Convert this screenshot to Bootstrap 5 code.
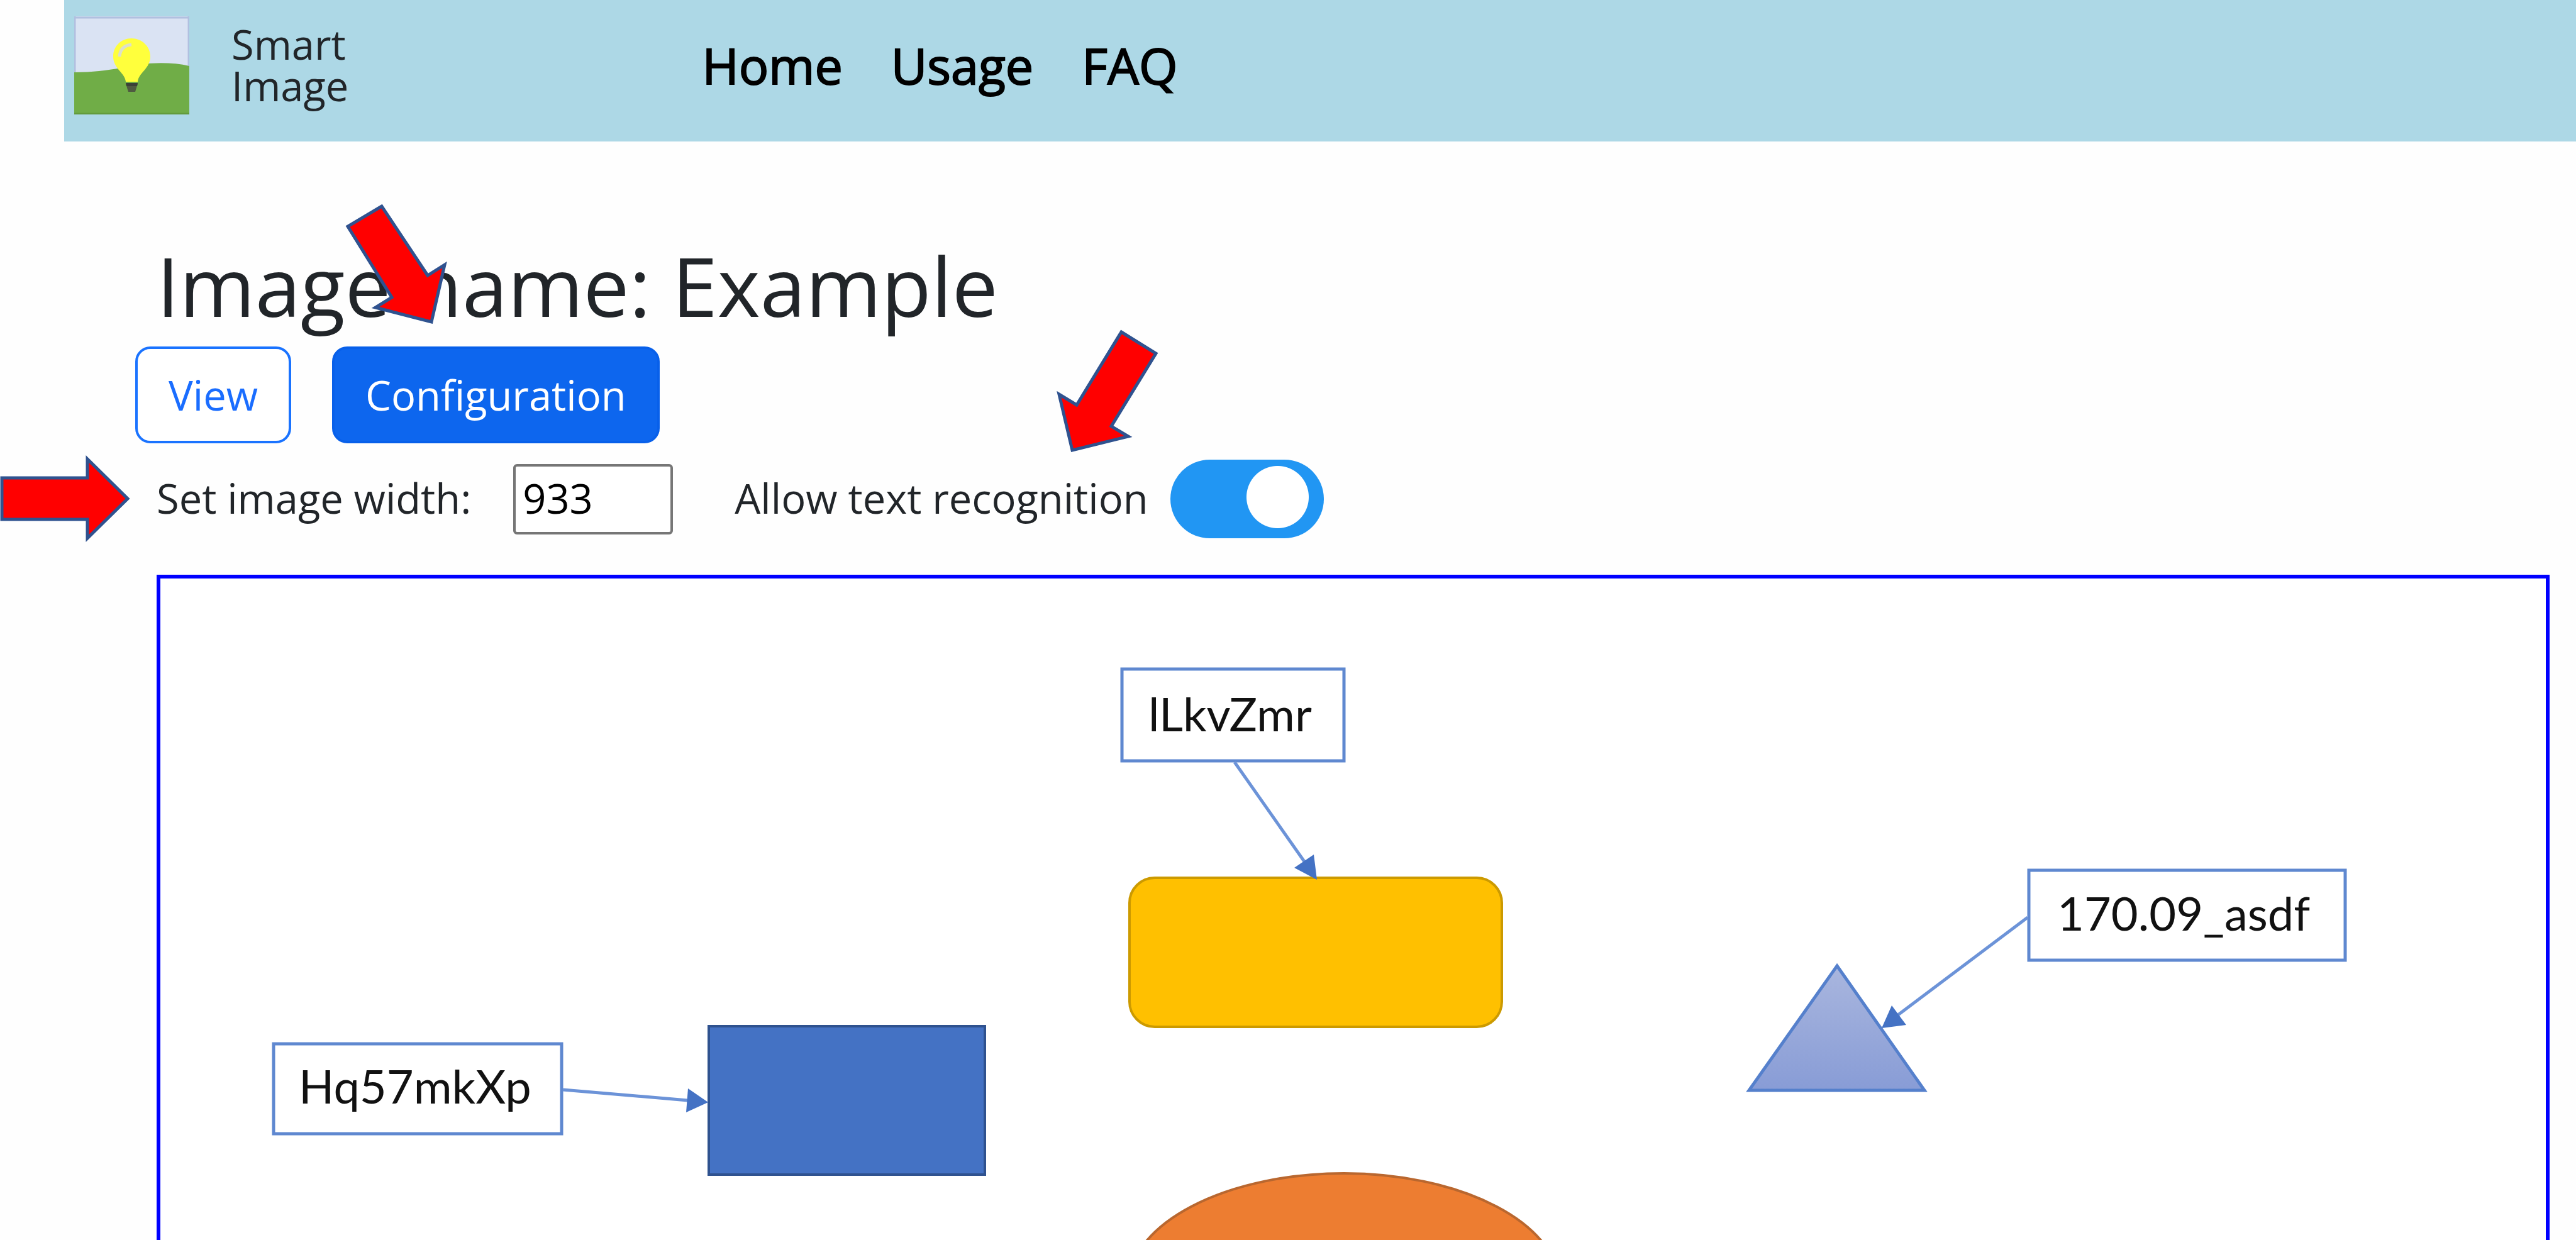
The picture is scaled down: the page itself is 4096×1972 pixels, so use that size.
<!DOCTYPE html>
<html lang="en">
<head>
<meta charset="utf-8">
<meta name="viewport" content="width=device-width, initial-scale=1">
<title>Smart Image</title>
<link href="https://cdn.jsdelivr.net/npm/bootstrap@5.3.0/dist/css/bootstrap.min.css" rel="stylesheet">
<style>
  body { font-family: "Open Sans", "Noto Sans", sans-serif; font-size: 65px; line-height: 98px; color: #212529; background: #fefefe; }
  .site-head { margin-left: 102px; padding: 26px 0 43px 16px; background: #add8e6; }
  .brand { gap: 67px; line-height: 66px; color: #212529; }
  .brand svg { width: 183px; height: 156px; }
  .brand span { padding-bottom: 3px; }
  .site-nav { gap: 77px; padding-left: 4px; font-size: 79px; }
  .site-nav a { color: #000; -webkit-text-stroke: 2px #000; }
  .page { padding: 151px 42px 0 215px; }
  .indent { margin-left: 34px; }
  .page h1 { font-size: 130px; line-height: 156px; margin-bottom: 19px; font-weight: 400; }
  .tabs { gap: 65px; }
  .tabs .btn { padding: 24px 49px; border-width: 4px; border-radius: 24px; font-size: 65px; line-height: 98px; }
  .tabs .btn-outline-primary { --bs-btn-color: #1a6dff; --bs-btn-border-color: #1a73ff; background: #fff; }
  .tabs .btn-primary { --bs-btn-bg: #0d66ee; --bs-btn-border-color: #0860ea; }
  .controls { margin-top: 26px; margin-bottom: 58px; }
  .controls label { padding-bottom: 4px; }
  .width-box { width: 254px; height: 112px; margin-left: 67px; margin-right: 98px; padding: 0 8px 4px 11px; border: 4px solid #767676; border-radius: 6px; color: #000; background: #fff; }
  .controls .toggle { width: 244px; height: 125px; margin: 0 0 0 35px; border: 0; border-radius: 63px; background: #2196f3 radial-gradient(circle, #fff 49px, transparent 50px) 121px 10px / 99px 99px no-repeat; }
  .frame { border: 6px solid #00f; border-bottom: 0; background: #fff; }
  .frame svg { width: 100%; }
  .node-label { font-family: Lato, "Open Sans", sans-serif; font-size: 74px; fill: #111; }
  .pointer { position: absolute; overflow: visible; fill: #f00; stroke: #2f528f; stroke-width: 5px; pointer-events: none; z-index: 2; }
  .to-config { left: 23px; top: -228px; }
  .to-toggle { left: 514px; top: -220px; }
  .to-width { left: -249px; bottom: -19px; }
</style>
</head>
<body>
<div class="vh-100 overflow-hidden d-flex flex-column">

  <header class="site-head d-flex align-items-center">
    <a href="#" class="brand col-3 d-flex align-items-center text-decoration-none">
      <svg viewBox="0 0 183 156" aria-hidden="true">
        <rect width="183" height="156" fill="#dae3f3"/>
        <path d="M0 2H183M1 0V90M182 0V80" fill="none" stroke="#b1c0e0" stroke-width="3"/>
        <path d="M0 89C30 89 50 86 75 82C105 74 150 71 183 79V156H0Z" fill="#70ad47"/>
        <path d="M0 155H183" stroke="#629b3c" stroke-width="3"/>
        <path d="M82 104C81 90 62 83 62 64C62 47 75 35 91 35C107 35 121 47 121 64C121 83 102 90 101 104Z" fill="#ffff3c"/>
        <path d="M72 64C73 52 80 46 91 45" fill="none" stroke="#dde0c8" stroke-width="5"/>
        <path d="M82 107H101L97 120H86Z" fill="#4f5a41"/>
        <path d="M82 106H101L100 111H83Z" fill="#3b4038"/>
      </svg>
      <span>Smart<br>Image</span>
    </a>
    <nav class="site-nav d-flex">
      <a href="#" class="text-decoration-none">Home</a>
      <a href="#" class="text-decoration-none">Usage</a>
      <a href="#" class="text-decoration-none">FAQ</a>
    </nav>
  </header>

  <main class="page flex-grow-1 d-flex flex-column">
    <h1 class="indent">Image name: Example</h1>

    <div class="tabs d-flex">
      <button type="button" class="btn btn-outline-primary">View</button>
      <div class="position-relative">
        <button type="button" class="btn btn-primary">Configuration</button>
        <svg class="pointer to-config" width="160" height="200" viewBox="0 0 160 200" aria-hidden="true">
          <path d="M56 5L2 37L72 150L46 166L135 189L156 98L129 115Z"/>
        </svg>
      </div>
    </div>

    <div class="controls indent d-flex align-items-center">
      <div class="position-relative d-flex">
        <label for="imgWidth">Set image width:</label>
        <svg class="pointer to-width" width="207" height="142" viewBox="0 0 207 142" aria-hidden="true">
          <path d="M3 38H139V8L203 71L139 134V104H3Z"/>
        </svg>
      </div>
      <input type="number" id="imgWidth" class="width-box" value="933">
      <div class="position-relative d-flex">
        <label for="textRec">Allow text recognition</label>
        <svg class="pointer to-toggle" width="160" height="200" viewBox="0 0 160 200" aria-hidden="true">
          <path d="M101 5L156 39L85 155L112 171L23 193L2 104L30 121Z"/>
        </svg>
      </div>
      <input type="checkbox" id="textRec" class="toggle form-check-input" role="switch" checked>
    </div>

    <div class="frame indent flex-grow-1">
      <svg class="d-block" viewBox="255 920 3793 1052" role="img" aria-label="Example diagram">
        <defs>
          <linearGradient id="tri" x1="0" y1="0" x2="0" y2="1">
            <stop offset="0" stop-color="#a9b6de"/>
            <stop offset="1" stop-color="#889cd6"/>
          </linearGradient>
        </defs>
        <g fill="#fff" stroke="#5f88d0" stroke-width="5">
          <rect x="1784" y="1064" width="353" height="146"/>
          <rect x="3226" y="1384" width="503" height="143"/>
          <rect x="435" y="1660" width="458" height="143"/>
        </g>
        <rect x="1796" y="1396" width="592" height="237" rx="40" fill="#ffc000" stroke="#cc9a00" stroke-width="4"/>
        <rect x="1127" y="1632" width="439" height="236" fill="#4472c4" stroke="#2f528f" stroke-width="4"/>
        <path d="M2921 1536L3060 1734H2781Z" fill="url(#tri)" stroke="#5580cc" stroke-width="5"/>
        <ellipse cx="2137" cy="2046" rx="343" ry="180" fill="#ed7d31" stroke="#b9672f" stroke-width="4"/>
        <g fill="none" stroke="#6c93d8" stroke-width="5">
          <path d="M1963 1212L2076 1373"/>
          <path d="M3224 1459L3018 1614"/>
          <path d="M895 1733L1094 1750"/>
        </g>
        <g fill="#4472c4">
          <path d="M2094 1399L2058 1380L2089 1359Z"/>
          <path d="M2992 1635L3008 1599L3031 1630Z"/>
          <path d="M1126 1753L1094 1731L1091 1769Z"/>
        </g>
        <g class="node-label">
          <text x="1826" y="1163">lLkvZmr</text>
          <text x="3271" y="1480">170.09_asdf</text>
          <text x="475" y="1755">Hq57mkXp</text>
        </g>
      </svg>
    </div>
  </main>
</div>
<script src="https://cdn.jsdelivr.net/npm/bootstrap@5.3.0/dist/js/bootstrap.bundle.min.js"></script>
</body>
</html>
